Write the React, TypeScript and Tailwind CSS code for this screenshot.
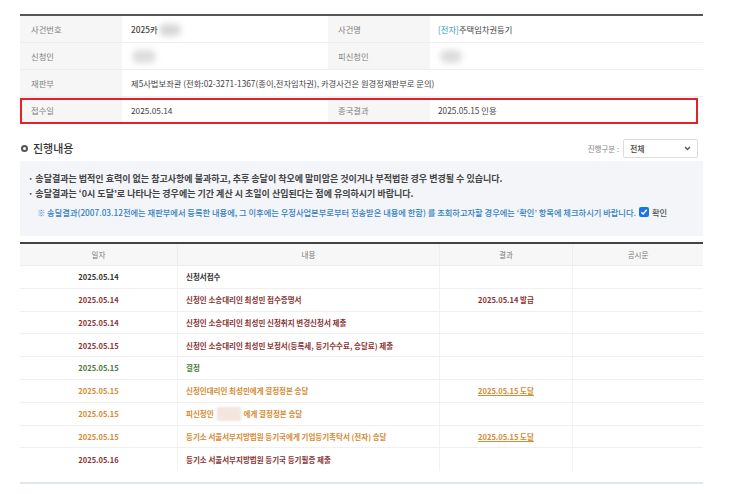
import React from "react";

const F = { fontFamily: '"Noto Sans CJK KR", "Noto Sans", sans-serif' };

function Blur({ w, h = 12, c = "#cfcfcf" }: { w: number; h?: number; c?: string }) {
  return (
    <span
      className="inline-block align-middle rounded-full blur-[3px]"
      style={{ width: w, height: h, background: c }}
    />
  );
}

type Row = { date: string; content: React.ReactNode; result?: string; color: string; link?: boolean };

const rows: Row[] = [
  { date: "2025.05.14", content: "신청서접수", color: "text-[#333333]" },
  { date: "2025.05.14", content: "신청인 소송대리인 최성민 접수증명서", result: "2025.05.14 발급", color: "text-[#8a3535]" },
  { date: "2025.05.14", content: "신청인 소송대리인 최성민 신청취지 변경신청서 제출", color: "text-[#8a3535]" },
  { date: "2025.05.15", content: "신청인 소송대리인 최성민 보정서(등록세, 등기수수료, 송달료) 제출", color: "text-[#8a3535]" },
  { date: "2025.05.15", content: "결정", color: "text-[#4d7a3c]" },
  { date: "2025.05.15", content: "신청인대리인 최성민에게 결정정본 송달", result: "2025.05.15 도달", color: "text-[#d58a33]", link: true },
  {
    date: "2025.05.15",
    content: (
      <span className="inline-flex items-center">
        피신청인<span className="inline-block w-[24px] h-[14px] mx-[3px] bg-[#f3e6de] blur-[1px]" />에게 결정정본 송달
      </span>
    ),
    color: "text-[#d58a33]",
  },
  { date: "2025.05.15", content: "등기소 서울서부지방법원 등기국에게 기업등기촉탁서 (전자) 송달", result: "2025.05.15 도달", color: "text-[#d58a33]", link: true },
  { date: "2025.05.16", content: "등기소 서울서부지방법원 등기국 등기필증 제출", color: "text-[#8a3535]" },
];

export default function App() {
  return (
    <div className="w-[749px] h-[494px] bg-white overflow-hidden" style={F}>
      <div className="ml-[20px] w-[683px] pt-[14px]">
        {/* top info table */}
        <div className="border-t-2 border-[#555555] text-[8.3px] text-[#444444]">
          <div className="flex h-[27px] border-b border-[#eeeeee]">
            <div className="w-[102px] bg-[#f6f6f6] flex items-center pl-[11px] text-[#808080]">사건번호</div>
            <div className="w-[206px] flex items-center pl-[9px] font-medium text-[#444]">
              2025카<span className="ml-[1px]"><Blur w={22} h={12} c="#d6d6d6" /></span>
            </div>
            <div className="w-[102px] bg-[#f6f6f6] flex items-center pl-[10px] text-[#808080]">사건명</div>
            <div className="flex-1 flex items-center pl-[8px]">
              <span className="text-[#2a9bb0]">[전자]</span>주택임차권등기
            </div>
          </div>
          <div className="flex h-[27px] border-b border-[#eeeeee]">
            <div className="w-[102px] bg-[#f6f6f6] flex items-center pl-[11px] text-[#808080]">신청인</div>
            <div className="w-[206px] flex items-center pl-[10px]">
              <Blur w={24} h={13} c="#dcdcdc" />
            </div>
            <div className="w-[102px] bg-[#f6f6f6] flex items-center pl-[10px] text-[#808080]">피신청인</div>
            <div className="flex-1 flex items-center pl-[10px]">
              <Blur w={22} h={13} c="#dcdcdc" />
            </div>
          </div>
          <div className="flex h-[27px] border-b border-[#eeeeee]">
            <div className="w-[102px] bg-[#f6f6f6] flex items-center pl-[11px] text-[#808080]">재판부</div>
            <div className="flex-1 flex items-center pl-[9px]">
              제5사법보좌관 (전화:02-3271-1367(종이,전자임차권), 카경사건은 원경정재판부로 문의)
            </div>
          </div>
          <div className="relative flex h-[27px]">
            <div className="w-[102px] bg-[#f6f6f6] flex items-center pl-[11px] text-[#808080]">접수일</div>
            <div className="w-[206px] flex items-center pl-[9px]">2025.05.14</div>
            <div className="w-[102px] bg-[#f6f6f6] flex items-center pl-[10px] text-[#808080]">종국결과</div>
            <div className="flex-1 flex items-center pl-[8px]">2025.05.15 인용</div>
            <div className="absolute left-0 right-[5px] top-[1px] bottom-0 border-2 border-[#e3202b]" />
          </div>
        </div>

        {/* section heading */}
        <div className="flex items-center justify-between mt-[12px] h-[25px]">
          <div className="flex items-center">
            <span className="w-[7px] h-[7px] rounded-full border-[2px] border-[#555555] ml-[1px]" />
            <span className="ml-[5px] text-[11px] font-medium text-[#333333]">진행내용</span>
          </div>
          <div className="flex items-center mr-[5px]">
            <span className="text-[7.5px] text-[#888888]">진행구분 :</span>
            <div className="ml-[4px] w-[75px] h-[19px] border border-[#dddddd] rounded-[2px] flex items-center justify-between px-[6px] bg-white">
              <span className="text-[8px] text-[#444444] font-medium">전체</span>
              <svg width="7" height="5" viewBox="0 0 7 5">
                <path d="M1 1 L3.5 3.5 L6 1" stroke="#555" strokeWidth="1.4" fill="none" />
              </svg>
            </div>
          </div>
        </div>

        {/* notice box */}
        <div className="h-[75px] bg-[#f3f5f8] rounded-[2px] pt-[10px] pl-[8px] text-[9px] font-bold text-[#444444]">
          <div className="leading-[15px]">· 송달결과는 법적인 효력이 없는 참고사항에 불과하고, 추후 송달이 착오에 말미암은 것이거나 부적법한 경우 변경될 수 있습니다.</div>
          <div className="leading-[15px]">· 송달결과는 ‘0시 도달’로 나타나는 경우에는 기간 계산 시 초일이 산입된다는 점에 유의하시기 바랍니다.</div>
          <div className="mt-[5px] pl-[9px] flex items-center font-medium text-[8.25px] text-[#2f7fc4]">
            ※ 송달결과(2007.03.12전에는 재판부에서 등록한 내용에, 그 이후에는 우정사업본부로부터 전송받은 내용에 한함) 를 조회하고자할 경우에는 ‘확인’ 항목에 체크하시기 바랍니다.
            <span className="ml-[3px] w-[10px] h-[10px] rounded-[2px] bg-[#1a73e8] flex items-center justify-center">
              <svg width="8" height="8" viewBox="0 0 8 8">
                <path d="M1.3 4.2 L3.2 6 L6.7 1.8" stroke="#fff" strokeWidth="1.5" fill="none" />
              </svg>
            </span>
            <span className="ml-[3px] text-[#555555]">확인</span>
          </div>
        </div>

        {/* progress table */}
        <div className="mt-[6px] border-t-2 border-[#444444] text-[7.5px]">
          <div className="flex h-[22px] bg-[#f7f7f7] text-[#777777] border-b border-[#eeeeee]">
            <div className="w-[158px] flex items-center justify-center border-r border-[#eeeeee]">일자</div>
            <div className="w-[262px] flex items-center justify-center border-r border-[#eeeeee]">내용</div>
            <div className="w-[133px] flex items-center justify-center border-r border-[#eeeeee]">결과</div>
            <div className="flex-1 flex items-center justify-center">공시문</div>
          </div>
          {rows.map((r, i) => (
            <div key={i} className={`flex h-[22.8px] font-bold ${r.color} ${i < rows.length - 1 ? "border-b border-[#f0f0f0]" : ""}`}>
              <div className="w-[158px] flex items-center justify-center border-r border-[#f2f2f2]">{r.date}</div>
              <div className="w-[262px] flex items-center pl-[8px] border-r border-[#f2f2f2] whitespace-nowrap">{r.content}</div>
              <div className="w-[133px] flex items-center justify-center border-r border-[#f2f2f2]">
                {r.result ? <span className={r.link ? "underline" : ""}>{r.result}</span> : null}
              </div>
              <div className="flex-1" />
            </div>
          ))}
          <div className="mt-[11px] h-[2px] bg-[#e1e7ee]" />
        </div>
      </div>
    </div>
  );
}
